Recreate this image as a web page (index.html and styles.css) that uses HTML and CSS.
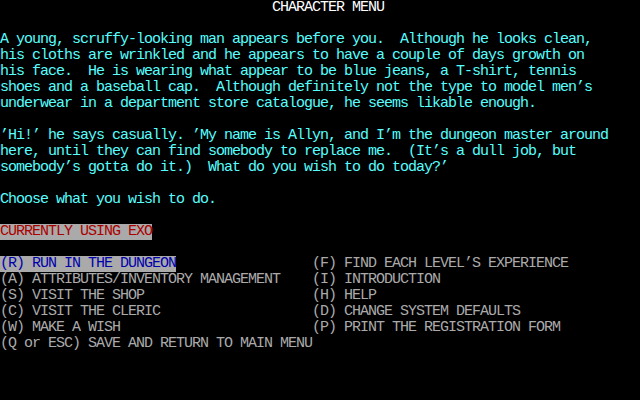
FILE: index.html
```html
<!DOCTYPE html>
<html lang="en">
  <head>
    <meta charset="UTF-8" />
    <title>Character Menu</title>
    <link rel="stylesheet" href="styles.css">
  </head>
  <body>
    <main class="screen">
      <div class="row title">CHARACTER MENU</div>
      <div class="blank"></div>
      <div class="story">
        <div class="row">A young, scruffy-looking man appears before you.  Although he looks clean,</div>
        <div class="row">his cloths are wrinkled and he appears to have a couple of days growth on</div>
        <div class="row">his face.  He is wearing what appear to be blue jeans, a T-shirt, tennis</div>
        <div class="row">shoes and a baseball cap.  Although definitely not the type to model men’s</div>
        <div class="row">underwear in a department store catalogue, he seems likable enough.</div>
        <div class="blank"></div>
        <div class="row">’Hi!’ he says casually. ’My name is Allyn, and I’m the dungeon master around</div>
        <div class="row">here, until they can find somebody to replace me.  (It’s a dull job, but</div>
        <div class="row">somebody’s gotta do it.)  What do you wish to do today?’</div>
        <div class="blank"></div>
        <div class="row">Choose what you wish to do.</div>
      </div>
      <div class="blank"></div>
      <div class="row"><span class="status">CURRENTLY USING EXO</span></div>
      <div class="blank"></div>
      <div class="menu">
        <div class="row"><span class="selected">(R) RUN IN THE DUNGEON</span></div>
        <div class="row">(F) FIND EACH LEVEL’S EXPERIENCE</div>
        <div class="row">(A) ATTRIBUTES/INVENTORY MANAGEMENT</div>
        <div class="row">(I) INTRODUCTION</div>
        <div class="row">(S) VISIT THE SHOP</div>
        <div class="row">(H) HELP</div>
        <div class="row">(C) VISIT THE CLERIC</div>
        <div class="row">(D) CHANGE SYSTEM DEFAULTS</div>
        <div class="row">(W) MAKE A WISH</div>
        <div class="row">(P) PRINT THE REGISTRATION FORM</div>
      </div>
      <div class="row">(Q or ESC) SAVE AND RETURN TO MAIN MENU</div>
    </main>
  </body>
</html>
```

FILE: styles.css
```css
html {
  background-color: #000;
}
body {
  margin: 0;
}
.screen {
  width: 640px;
  height: 400px;
  overflow: hidden;
  background-color: #000;
  color: #aaaaaa;
  font-family: "Liberation Mono", "DejaVu Sans Mono", monospace;
  font-size: 15px;
  letter-spacing: -1px;
}
.row {
  height: 16px;
  line-height: 16px;
  white-space: pre;
}
.blank {
  height: 16px;
}
.title {
  color: #fff;
  padding-left: 272px;
}
.story {
  color: #55ffff;
}
.status {
  display: inline-block;
  width: 152px;
  background-color: #aaaaaa;
  color: #aa0000;
}
.selected {
  display: inline-block;
  width: 176px;
  background-color: #aaaaaa;
  color: #0000aa;
}
.menu {
  display: grid;
  grid-template-columns: 312px 1fr;
}
```
